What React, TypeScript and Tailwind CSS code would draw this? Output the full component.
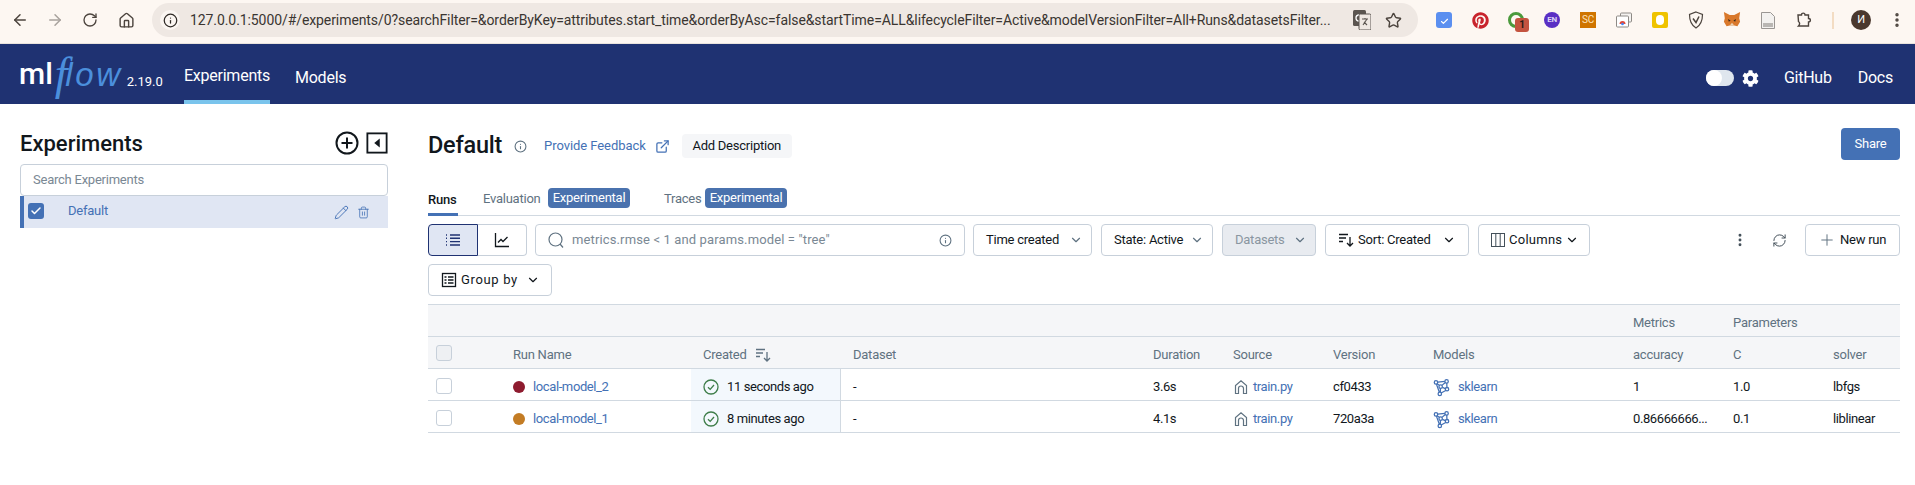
import React from 'react';
import { ArrowLeft, ArrowRight, RotateCw, House, Info, Star, EllipsisVertical, ChevronDown, Pencil, Trash2, Check, ExternalLink, Plus, RefreshCw } from 'lucide-react';
import { FaPinterest, FaCog } from 'react-icons/fa';

const COLS = 'grid grid-cols-[77px_186px_150px_300px_80px_100px_100px_200px_100px_100px_79px]';

function SortIcon({ className = '' }: { className?: string }) {
  return (
    <svg viewBox="0 0 16 16" className={className} fill="none" stroke="currentColor" strokeWidth="1.3">
      <path d="M1 2.500h9M1 6h7M1 9.500h4" />
      <path d="M12 5v9M9 11l3 3 3-3" />
    </svg>
  );
}

function ModelIcon() {
  return (
    <svg viewBox="0 0 20 20" className="w-[17px] h-[19px] text-[#4471b5]" fill="none" stroke="currentColor" strokeWidth="1.500">
      <circle cx="3.500" cy="4" r="2" />
      <circle cx="16" cy="2.800" r="2" />
      <circle cx="16.500" cy="12" r="2" />
      <circle cx="8" cy="17.500" r="2" />
      <circle cx="9" cy="9" r="2" />
      <path d="M5.500 3.800l8.500-1M5 5.500l2.500 2M10.500 7.500l4-3.500M11 9.800l3.500 1.500M15 13.500l-5.500 3M8.700 11v4.500M4 6l3.500 9.500M16.200 4.800l.2 5.200" />
    </svg>
  );
}

function SourceIcon() {
  return (
    <svg viewBox="0 0 16 16" className="w-4 h-4 text-[#5f7281]" fill="none" stroke="currentColor" strokeWidth="1.200">
      <path d="M2.500 14.500V6.500L8 1.800l5.500 4.700v8h-3V9.500a2.500 2.500 0 0 0-5 0v5z" />
    </svg>
  );
}

function Btn({ children, className = '' }: { children: React.ReactNode; className?: string }) {
  return (
    <div className={`h-8 flex items-center border border-[#c7d0da] rounded text-[13px] text-[#11171c] bg-white shrink-0 ${className}`}>
      {children}
    </div>
  );
}

function Ext({ children, className = '' }: { children?: React.ReactNode; className?: string }) {
  return <div className={`w-[36px] h-5 flex items-center justify-center shrink-0 relative ${className}`}>{children}</div>;
}

function ChromeBar() {
  return (
    <div className="h-[44px] bg-[#fdf7f2] border-b border-[#e9e3dd] flex items-start pt-[3px] text-[#4c443e]">
      <div className="w-[152px] h-[34px] flex items-center shrink-0 pl-[11px]">
        <ArrowLeft size={18} strokeWidth={2} />
        <ArrowRight size={18} strokeWidth={2} className="ml-[17px] text-[#a8a29d]" />
        <RotateCw size={16} strokeWidth={2} className="ml-[18px]" />
        <House size={17} strokeWidth={2} className="ml-[20px]" />
      </div>
      <div className="w-[1266px] h-[34px] rounded-full bg-[#efe8e3] flex items-center shrink-0 pl-2 pr-[16px]">
        <div className="w-[20px] h-[20px] rounded-full bg-[#fbf6f2] flex items-center justify-center shrink-0">
          <Info size={15} strokeWidth={2} className="text-[#2f2a26]" />
        </div>
        <span className="ml-[10px] text-[14px] tracking-[-0.006em] text-[#3a3531] whitespace-nowrap flex-1 min-w-0">
          127.0.0.1:5000/#/experiments/0?searchFilter=&orderByKey=attributes.start_time&orderByAsc=false&startTime=ALL&lifecycleFilter=Active&modelVersionFilter=All+Runs&datasetsFilter...
        </span>
        <svg viewBox="0 0 18 20" className="w-[18px] h-[20px] ml-[17px] shrink-0">
          <rect x="0" y="0" width="13" height="16" rx="1.500" fill="#5b5550" />
          <circle cx="6" cy="8" r="3" fill="none" stroke="#fff" strokeWidth="1.300" />
          <rect x="6" y="4" width="12" height="16" rx="1.500" fill="#efe8e3" stroke="#5b5550" />
          <path d="M9 9h6M12 8v1M10 15l4-6M14 15l-3-3" fill="none" stroke="#5b5550" strokeWidth="1.100" />
        </svg>
        <Star size={17} strokeWidth={2} className="ml-[14px] shrink-0" />
      </div>
      <div className="flex items-center h-[34px] pl-[8px]">
        <Ext>
          <div className="w-4 h-4 rounded-[3px] bg-[#5b8ff0] flex items-end justify-center pb-0.5"><Check size={9} strokeWidth={3} className="text-white" /></div>
        </Ext>
        <Ext><FaPinterest size={17} className="text-[#c8232c]" /></Ext>
        <Ext>
          <div className="w-4 h-4 rounded-full border-[3px] border-[#4b9a3c]" />
          <div className="absolute left-[17px] top-[8px] w-[14px] h-[14px] rounded-[3px] bg-[#c4533f] text-[#2a1a14] text-[10px] leading-[14px] text-center font-bold">1</div>
        </Ext>
        <Ext><div className="w-4 h-4 rounded-full bg-[#5a2fc4] text-[#dcd3f5] text-[8px] leading-4 text-center font-bold">EN</div></Ext>
        <Ext><div className="w-4 h-4 bg-[#cf7400] text-[#fbe2bd] text-[10px] leading-4 text-center">SC</div></Ext>
        <Ext>
          <svg viewBox="0 0 16 16" className="w-4 h-4">
            <rect x="4.500" y="1" width="11" height="9" rx="1" fill="#f4f2f0" stroke="#8e8a86" />
            <rect x="0.500" y="4" width="12" height="11" rx="1" fill="#fff" stroke="#8e8a86" />
            <path d="M3.500 12a3 3 0 0 1 6 0z" fill="#e24a3b" />
            <circle cx="6.500" cy="12" r="1.300" fill="#4285f4" />
          </svg>
        </Ext>
        <Ext><div className="w-4 h-4 rounded-[2px] bg-[#efc300] flex items-center justify-center"><div className="w-2 h-2.5 rounded-full bg-white" /></div></Ext>
        <Ext>
          <svg viewBox="0 0 16 18" className="w-4 h-[18px]" fill="none" stroke="#4c443e" strokeWidth="1.200">
            <path d="M8 1l6.500 2.500c0 6-1.500 10.500-6.500 13.500C3 14 1.500 9.500 1.500 3.500z" />
            <path d="M5 7.500l3 4 3-6" strokeWidth="1.500" />
          </svg>
        </Ext>
        <Ext>
          <svg viewBox="0 0 20 20" className="w-[18px] h-[18px]">
            <path d="M1 1l6.500 3.500h5L19 1l-1 7 1 4-3 5-3.500-1h-5L4 17l-3-5 1-4z" fill="#d9782b" />
            <path d="M5.500 9l3 1.500-2 1.500zM14.500 9l-3 1.500 2 1.500z" fill="#3a2a1c" />
            <path d="M7.500 16l2.500-3 2.500 3z" fill="#ecd3b5" />
          </svg>
        </Ext>
        <Ext>
          <svg viewBox="0 0 14 17" className="w-[14px] h-[17px]">
            <path d="M.5.500h9l4 4v12H.5z" fill="#f3f1ef" stroke="#9a9693" />
            <rect x="2" y="11" width="10" height="4" fill="#b9b6b3" />
          </svg>
        </Ext>
        <Ext>
          <svg viewBox="0 0 16 16" className="w-4 h-4" fill="none" stroke="#4c443e" strokeWidth="1.400">
            <path d="M2 3h3.500c0-2.500 3.500-2.500 3.500 0h3.500v3.500c2.500 0 2.500 3.500 0 3.500V14H2.500c1.500-1.500 1.500-3.500 0-4.500z" />
          </svg>
        </Ext>
        <div className="w-0.5 h-[17px] bg-[#f3dcc3] ml-[10px]" />
        <div className="w-5 h-5 rounded-full bg-[#4a382e] text-white text-[11px] leading-5 text-center ml-[17px]">И</div>
        <EllipsisVertical size={18} strokeWidth={2.600} className="ml-[17px]" />
      </div>
    </div>
  );
}

function Nav() {
  return (
    <div className="h-[60px] bg-[#1f3272] flex items-stretch text-white">
      <div className="w-[184px] shrink-0 flex items-center pl-[19px]">
        <span className="text-[30px] leading-none font-medium tracking-normal">ml</span>
        <span className="text-[46px] leading-none italic text-[#4b8fdc] font-['Liberation_Serif',serif] ml-[2px]">f</span>
        <span className="text-[33px] leading-none italic text-[#4b8fdc] tracking-[0.08em] -ml-[2px] font-['Liberation_Sans',sans-serif]">low</span>
        <span className="text-[13px] ml-[4px] mt-[15px] tracking-normal">2.19.0</span>
      </div>
      <div className="w-[86px] flex items-center justify-center text-[16px] border-b-4 border-[#7ac4ec] pt-[8px] shrink-0">Experiments</div>
      <div className="ml-[25px] flex items-center text-[16px] pt-[8px]">Models</div>
      <div className="flex-1" />
      <div className="flex items-center text-[16px] pr-[22px] pt-[8px]">
        <div className="w-[28px] h-4 rounded-full bg-[#dfe6ee] relative mr-2"><div className="absolute left-0 top-0 w-4 h-4 rounded-full bg-white" /></div>
        <FaCog size={17} />
        <span className="ml-[25px]">GitHub</span>
        <span className="ml-[26px]">Docs</span>
      </div>
    </div>
  );
}

function Sidebar() {
  return (
    <div className="w-[428px] shrink-0 pl-5 pr-[40px] pt-[23px]">
      <div className="h-[32px] flex items-center justify-between">
        <span className="text-[22px] font-medium text-[#11171c] tracking-normal">Experiments</span>
        <div className="flex items-center gap-[7px] text-[#11171c]">
          <svg viewBox="0 0 24 24" className="w-[24px] h-[24px]" fill="none" stroke="currentColor" strokeWidth="2"><circle cx="12" cy="12" r="10.500" /><path d="M12 6.500v11M6.500 12h11" /></svg>
          <svg viewBox="0 0 24 24" className="w-[22px] h-[22px]" fill="none" stroke="currentColor" strokeWidth="2"><rect x="1.500" y="1.500" width="21" height="21" /><path d="M15 7v10l-6-5z" fill="currentColor" stroke="none" /></svg>
        </div>
      </div>
      <div className="mt-[5px] h-[32px] border border-[#c7d0da] rounded flex items-center pl-3 text-[13px] text-[#7a8894]">Search Experiments</div>
      <div className="h-[32px] bg-[#e0e6f3] border-l-4 border-[#4471b5] flex items-center text-[13px] text-[#4471b5] pl-1">
        <div className="w-4 h-4 rounded-[3px] bg-[#4471b5] flex items-center justify-center mb-[3px]"><Check size={12} strokeWidth={3} className="text-white" /></div>
        <span className="ml-[24px] mb-[3px]">Default</span>
        <div className="flex-1" />
        <Pencil size={15} strokeWidth={1.500} className="mr-2" />
        <Trash2 size={13} strokeWidth={1.500} className="mr-[18px]" />
      </div>
    </div>
  );
}

function Toolbar() {
  return (
    <div className="flex flex-col gap-2 mt-2">
      <div className="flex items-center">
        <div className="flex shrink-0">
          <div className="w-[50px] h-8 flex items-center justify-center bg-[#e0e6f3] border border-[#1f3272] rounded-l text-[#1f3272]">
            <svg viewBox="0 0 16 16" className="w-4 h-4" fill="none" stroke="currentColor" strokeWidth="1.400"><path d="M5 3h10M5 6.300h10M5 9.600h10M5 13h10" /><path d="M1 3h2M1 6.300h2M1 9.600h2M1 13h2" strokeDasharray="1 1" /></svg>
          </div>
          <div className="w-[49px] h-8 flex items-center justify-center border border-l-0 border-[#c7d0da] rounded-r text-[#11171c]">
            <svg viewBox="0 0 16 16" className="w-4 h-4" fill="none" stroke="currentColor" strokeWidth="1.300"><path d="M1.500 1v13.500H15" /><path d="M4 10.500l3-3 2 2 4.500-4.500" /></svg>
          </div>
        </div>
        <Btn className="ml-[8px] w-[430px] pl-3 pr-3">
          <svg viewBox="0 0 16 16" className="w-4 h-4 text-[#5f7281]" fill="none" stroke="currentColor" strokeWidth="1.200"><circle cx="7.500" cy="7.500" r="6.500" /><path d="M12 12l3 3.500" /></svg>
          <span className="ml-[8px] text-[#7a8894] flex-1 tracking-[0.01em]">metrics.rmse &lt; 1 and params.model = "tree"</span>
          <Info size={13} className="text-[#5f7281]" />
        </Btn>
        <Btn className="ml-2 w-[119px] pl-3 justify-between pr-2"><span>Time created</span><ChevronDown size={14} className="text-[#5f7281]" /></Btn>
        <Btn className="ml-[9px] w-[112px] pl-3 justify-between pr-2"><span>State: Active</span><ChevronDown size={14} className="text-[#5f7281]" /></Btn>
        <Btn className="ml-[9px] w-[94px] pl-3 justify-between pr-2 !bg-[#e8ebf0]"><span className="text-[#8a96a1]">Datasets</span><ChevronDown size={14} className="text-[#5f7281]" /></Btn>
        <Btn className="ml-[9px] w-[144px] pl-3 pr-3 justify-between"><span className="flex items-center gap-1"><SortIcon className="w-4 h-4" />Sort: Created</span><ChevronDown size={14} /></Btn>
        <Btn className="ml-[9px] w-[112px] pl-3 gap-1">
          <svg viewBox="0 0 14 16" className="w-[14px] h-4 text-[#44505a]" fill="none" stroke="currentColor" strokeWidth="1"><rect x=".5" y="1.500" width="13" height="13" /><path d="M4.800 1.500v13M9.200 1.500v13" /></svg>
          <span className="tracking-[0.02em]">Columns</span><ChevronDown size={14} className="-ml-[1px]" />
        </Btn>
        <div className="flex-1" />
        <EllipsisVertical size={16} strokeWidth={2.400} className="text-[#44505a] mr-[24px]" />
        <RefreshCw size={15} strokeWidth={1.600} className="text-[#44505a] mr-[18px]" />
        <Btn className="w-[95px] pl-3 gap-1"><Plus size={18} strokeWidth={1.300} className="text-[#5f7281]" />New run</Btn>
      </div>
      <Btn className="w-[124px] pl-3 gap-1">
        <svg viewBox="0 0 16 16" className="w-4 h-4" fill="none" stroke="currentColor" strokeWidth="1.300"><rect x="1.500" y="1.500" width="13" height="13" /><path d="M3.500 5h2M7 5h5.500M3.500 8h2M7 8h5.500M3.500 11h2M7 11h5.500" /></svg>
        <span className="tracking-[0.05em]">Group by</span>
        <ChevronDown size={14} className="ml-[4px]" />
      </Btn>
    </div>
  );
}

function Row({ color, name, ago, dur, ver, acc, c, solver }: { color: string; name: string; ago: string; dur: string; ver: string; acc: string; c: string; solver: string }) {
  const cell = 'pl-3 pt-[5px] flex items-center';
  return (
    <div className={`${COLS} h-8 border-b border-[#d1d9e1] text-[13px] text-[#11171c] tracking-[-0.03em]`}>
      <div className="pl-2 pt-[2px] flex items-center"><div className="w-4 h-4 rounded-[3px] border border-[#c7d0da]" /></div>
      <div className="pl-2 pt-[5px] flex items-center text-[#4471b5]"><div className="w-3 h-3 rounded-full mr-[8px]" style={{ backgroundColor: color }} />{name}</div>
      <div className={`${cell} bg-[#f3f8fd] border-r border-[#d1d9e1]`}>
        <svg viewBox="0 0 16 16" className="w-4 h-4 text-[#3e7d49] mr-2" fill="none" stroke="currentColor" strokeWidth="1.300"><circle cx="8" cy="8" r="7" /><path d="M5 8.200l2.200 2.200L11 6" /></svg>
        {ago}
      </div>
      <div className={cell}>-</div>
      <div className={cell}>{dur}</div>
      <div className={`${cell} text-[#4471b5] gap-1`}><SourceIcon />train.py</div>
      <div className={cell}>{ver}</div>
      <div className={`${cell} text-[#4471b5] gap-2`}><ModelIcon />sklearn</div>
      <div className={cell}>{acc}</div>
      <div className={cell}>{c}</div>
      <div className={cell}>{solver}</div>
    </div>
  );
}

function RunsTable() {
  const hd = 'pl-3 pt-[5px] flex items-center';
  return (
    <div className="mt-2 text-[13px] text-[#5f7281]">
      <div className={`${COLS} h-[33px] bg-[#f5f6f8] border-y border-[#d1d9e1]`}>
        <div className={`${hd} col-start-9`}>Metrics</div>
        <div className={hd}>Parameters</div>
      </div>
      <div className={`${COLS} h-8 bg-[#f5f6f8] border-b border-[#d1d9e1]`}>
        <div className="pl-2 flex items-center"><div className="w-4 h-4 rounded-[3px] border border-[#c7d0da] bg-[#eef0f3]" /></div>
        <div className="pl-2 pt-[5px] flex items-center">Run Name</div>
        <div className={hd}>Created<SortIcon className="w-4 h-4 ml-2" /></div>
        <div className={hd}>Dataset</div>
        <div className={hd}>Duration</div>
        <div className={hd}>Source</div>
        <div className={hd}>Version</div>
        <div className={hd}>Models</div>
        <div className={hd}>accuracy</div>
        <div className={hd}>C</div>
        <div className={hd}>solver</div>
      </div>
      <Row color="#8e1b2f" name="local-model_2" ago="11 seconds ago" dur="3.6s" ver="cf0433" acc="1" c="1.0" solver="lbfgs" />
      <Row color="#c37c24" name="local-model_1" ago="8 minutes ago" dur="4.1s" ver="720a3a" acc="0.86666666..." c="0.1" solver="liblinear" />
    </div>
  );
}

export default function App() {
  return (
    <div className="w-[1915px] h-[485px] bg-white overflow-hidden font-['Roboto',sans-serif] tracking-[-0.015em]">
      <ChromeBar />
      <Nav />
      <div className="flex">
        <Sidebar />
        <div className="w-[1472px] shrink-0 pt-[24px]">
          <div className="h-8 flex items-center">
            <div className="flex items-center pt-1">
              <span className="text-[23.500px] font-medium text-[#11171c]">Default</span>
              <Info size={13} className="text-[#5f7281] ml-3" />
              <span className="ml-[17px] text-[13px] text-[#4471b5] tracking-[-0.005em]">Provide Feedback</span>
              <ExternalLink size={15} className="ml-[9px] text-[#4471b5]" />
              <span className="ml-[12px] h-6 w-[110px] flex items-center justify-center bg-[#f5f6f8] text-[13px] text-[#11171c] rounded-sm">Add Description</span>
            </div>
            <div className="flex-1" />
            <div className="w-[59px] h-8 bg-[#4471b5] rounded text-white text-[13px] flex items-center justify-center">Share</div>
          </div>
          <div className="mt-[20px] h-[36px] flex items-end border-b border-[#d1d9e1] text-[13px]">
            <div className="h-[26px] w-[30px] font-medium text-[#11171c] border-b-[3px] border-[#4471b5] -mb-px">Runs</div>
            <div className="h-[26px] ml-[25px] flex items-start text-[#5f7281]">
              <span className="w-[65px]">Evaluation</span>
              <span className="-mt-[1px] w-[82px] h-5 bg-[#4a72ae] rounded text-white flex items-center justify-center">Experimental</span>
            </div>
            <div className="h-[26px] ml-[34px] flex items-start text-[#5f7281]">
              <span className="w-[41px]">Traces</span>
              <span className="-mt-[1px] w-[82px] h-5 bg-[#4a72ae] rounded text-white flex items-center justify-center">Experimental</span>
            </div>
          </div>
          <Toolbar />
          <RunsTable />
        </div>
      </div>
    </div>
  );
}
